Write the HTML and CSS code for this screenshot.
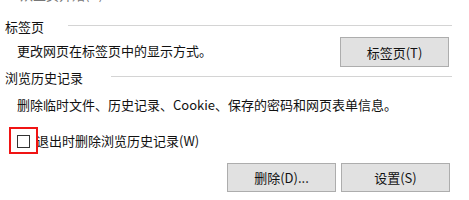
FILE: index.html
```html
<!DOCTYPE html>
<html lang="zh-CN">
<head>
    <meta charset="UTF-8">
    <meta name="viewport" content="width=device-width, initial-scale=1.0">
    <title>Internet 选项</title>
    <link rel="stylesheet" href="styles.css">
</head>
<body>

    <div class="panel">
        <!-- previous group, scrolled out of view -->
        <div class="cut-line">
            <div class="cut-text">从主页开始(H)</div>
        </div>

        <div class="group-title">
            <span>标签页</span>
            <div class="rule"></div>
        </div>
        <div class="row">
            <span class="desc">更改网页在标签页中的显示方式。</span>
            <button class="btn">标签页(T)</button>
        </div>

        <div class="group-title second">
            <span>浏览历史记录</span>
            <div class="rule wide"></div>
        </div>
        <div class="desc-line">删除临时文件、历史记录、Cookie、保存的密码和网页表单信息。</div>

        <div class="check-row">
            <span class="check-box"></span>
            <span class="check-label">退出时删除浏览历史记录(W)</span>
            <span class="mark"></span>
        </div>

        <div class="actions">
            <button class="btn">删除(D)...</button>
            <button class="btn">设置(S)</button>
        </div>
    </div>

</body>
</html>
```

FILE: styles.css
```css
/* General Styling */
body {
    margin: 0;
    padding: 0;
    background: #fff;
    color: #111;
    font-family: "Microsoft YaHei", "Noto Sans CJK SC", "Noto Sans", sans-serif;
    font-size: 13px;
    overflow: hidden;
}

.panel {
    width: 469px;
    height: 200px;
    overflow: hidden;
}

.cut-line {
    height: 3px;
    overflow: hidden;
    padding-left: 20px;
}

.cut-text {
    margin-top: -13px;
    line-height: 16px;
    color: #777;
}

.group-title {
    display: flex;
    align-items: center;
    height: 17px;
    line-height: 17px;
    margin-top: 15px;
    padding-left: 5px;
    padding-right: 17px;
}

.group-title.second {
    margin-top: 2px;
}

.rule {
    flex: 1;
    height: 1px;
    margin-left: 24px;
    margin-bottom: 2px;
    background-color: #d4d4d4;
}

.rule.wide {
    margin-left: 28px;
}

.row {
    display: flex;
    justify-content: space-between;
    align-items: center;
    margin-top: 2px;
    padding-left: 17px;
    padding-right: 20px;
}

.desc {
    line-height: 17px;
    margin-bottom: 3px;
}

.btn {
    width: 109px;
    height: 30px;
    padding: 0;
    background-color: #e1e1e1;
    border: 1px solid #adadad;
    border-radius: 0;
    font-family: inherit;
    font-size: 13px;
    color: #111;
}

.desc-line {
    margin-top: 10px;
    padding-left: 17px;
    line-height: 17px;
}

/* Checkbox with red annotation */
.check-row {
    position: relative;
    display: flex;
    align-items: center;
    height: 27px;
    margin-top: 14px;
    padding-left: 17px;
}

.check-box {
    width: 11px;
    height: 11px;
    border: 1px solid #333;
    margin-top: 2px;
}

.check-label {
    margin-left: 6px;
    line-height: 17px;
}

.mark {
    position: absolute;
    left: 9px;
    top: 0;
    width: 25px;
    height: 23px;
    border: 2px solid #f01414;
}

.actions {
    display: flex;
    justify-content: flex-end;
    gap: 5px;
    margin-top: 9px;
    padding-right: 19px;
}

.actions .btn {
    height: 29px;
}
```
